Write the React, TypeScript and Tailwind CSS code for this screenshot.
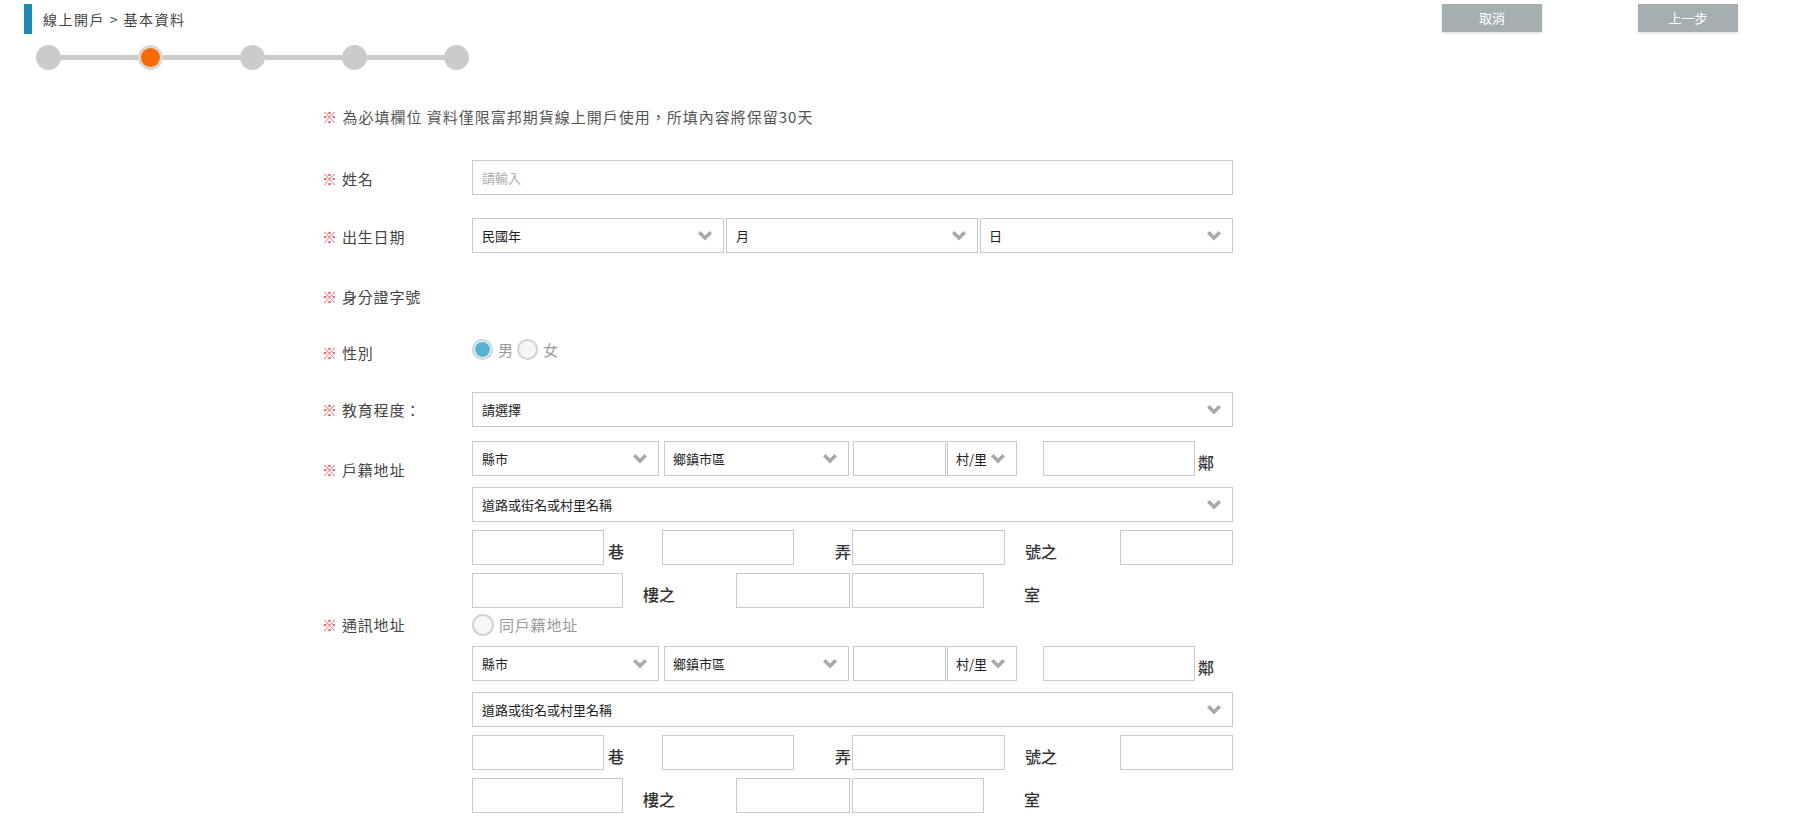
import React from "react";

const Chevron = () => (
  <svg width="14" height="10" viewBox="0 0 14 10" className="shrink-0">
    <polygon points="0,2.5 2.5,0 7,4.5 11.5,0 14,2.5 7,9.5" fill="#a9a9a9" />
  </svg>
);

function Select({ text, w, pl = "pl-[9px]" }: { text: string; w: string; pl?: string }) {
  return (
    <div className={`${w} ${pl} h-[35px] shrink-0 flex items-center justify-between pr-[11px] border border-[#cacaca] bg-white text-[13px] text-[#222]`}>
      <span>{text}</span>
      <Chevron />
    </div>
  );
}

function Box({ w, cls = "" }: { w: string; cls?: string }) {
  return <div className={`${w} ${cls} h-[35px] shrink-0 border border-[#cacaca] bg-white`} />;
}

function Label({ text, pt }: { text: string; pt: string }) {
  return (
    <div className={`w-[150px] shrink-0 ${pt} text-[15px] leading-[20px] tracking-[0.8px] text-[#444]`}>
      <span className="text-[#e8505a]">※</span> {text}
    </div>
  );
}

const Unit = ({ t, cls = "" }: { t: string; cls?: string }) => (
  <span className={`${cls} text-[16px] leading-[20px] pt-[6px] text-[#333] font-medium shrink-0`}>{t}</span>
);

function Address() {
  return (
    <>
      <div className="flex items-center">
        <Select text="縣市" w="w-[187px]" />
        <div className="ml-[5px]">
          <Select text="鄉鎮市區" w="w-[185px]" pl="pl-[8px]" />
        </div>
        <Box w="w-[93px]" cls="ml-[4px]" />
        <div className="ml-[1px]">
          <Select text="村/里" w="w-[70px]" pl="pl-[8px]" />
        </div>
        <Box w="w-[152px]" cls="ml-[26px]" />
        <Unit t="鄰" cls="ml-[3px]" />
      </div>
      <div className="mt-[11px]">
        <Select text="道路或街名或村里名稱" w="w-[761px]" />
      </div>
      <div className="flex items-center mt-[8px]">
        <Box w="w-[132px]" />
        <Unit t="巷" cls="ml-[4px]" />
        <Box w="w-[132px]" cls="ml-[38px]" />
        <Unit t="弄" cls="ml-[41px]" />
        <Box w="w-[153px]" cls="ml-[1px]" />
        <Unit t="號之" cls="ml-[20px]" />
        <Box w="w-[113px]" cls="ml-[63px]" />
      </div>
      <div className="flex items-center mt-[8px]">
        <Box w="w-[151px]" />
        <Unit t="樓之" cls="ml-[20px]" />
        <Box w="w-[114px]" cls="ml-[61px]" />
        <Box w="w-[132px]" cls="ml-[2px]" />
        <Unit t="室" cls="ml-[40px]" />
      </div>
    </>
  );
}

const Radio = ({ on, size = "w-[21px] h-[21px]" }: { on?: boolean; size?: string }) => (
  <div className={`${size} shrink-0 rounded-full border-2 border-[#d2d2d2] bg-[#f6f6f6] flex items-center justify-center`}>
    {on && <div className="w-[15px] h-[15px] rounded-full bg-[#56b3d6]" />}
  </div>
);

export default function App() {
  const Dot = () => <div className="w-[25px] h-[25px] rounded-full bg-[#cbcbcb] shrink-0" />;
  const Line = () => <div className="w-[77px] h-[5px] bg-[#cbcbcb] shrink-0" />;
  return (
    <div className="w-[1815px] h-[819px] bg-white overflow-hidden font-['Noto_Sans_CJK_TC','Noto_Sans',sans-serif]">
      <div className="flex justify-between pt-[4px]">
        <div className="flex items-center h-[30px]">
          <div className="ml-[24px] w-[8px] h-[30px] bg-[#1a8db3]" />
          <span className="ml-[11px] text-[14px] tracking-[1.5px] text-[#444]">線上開戶 &gt; 基本資料</span>
        </div>
        <div className="flex gap-[96px] pr-[77px]">
          <button className="w-[100px] h-[28px] bg-[#a5afb2] text-white text-[13px] shadow-[0_1px_2px_rgba(0,0,0,0.15)]">取消</button>
          <button className="w-[100px] h-[28px] bg-[#a5afb2] text-white text-[13px] shadow-[0_1px_2px_rgba(0,0,0,0.15)]">上一步</button>
        </div>
      </div>

      <div className="flex items-center ml-[36px] mt-[11px]">
        <Dot />
        <Line />
        <div className="w-[25px] h-[25px] rounded-full bg-[#d6d6d6] shrink-0 flex items-center justify-center">
          <div className="w-[19px] h-[19px] rounded-full bg-[#ff6a00]" />
        </div>
        <Line />
        <Dot />
        <Line />
        <Dot />
        <Line />
        <Dot />
      </div>

      <div className="ml-[322px] w-[911px]">
        <p className="mt-[37px] text-[15px] leading-[20px] tracking-[1px] text-[#555]">
          <span className="text-[#e8505a]">※</span> 為必填欄位 資料僅限富邦期貨線上開戶使用，所填內容將保留30天
        </p>

        <div className="flex mt-[33px]">
          <Label text="姓名" pt="pt-[9px]" />
          <div className="w-[761px] h-[35px] border border-[#cacaca] flex items-center pl-[9px] text-[13px] text-[#aaa]">請輸入</div>
        </div>

        <div className="flex mt-[23px]">
          <Label text="出生日期" pt="pt-[9px]" />
          <div className="flex">
            <Select text="民國年" w="w-[252px]" />
            <div className="ml-[2px]">
              <Select text="月" w="w-[252px]" />
            </div>
            <div className="ml-[2px]">
              <Select text="日" w="w-[253px]" pl="pl-[8px]" />
            </div>
          </div>
        </div>

        <div className="flex mt-[34px]">
          <Label text="身分證字號" pt="pt-0" />
        </div>

        <div className="flex mt-[29px]">
          <Label text="性別" pt="pt-[7px]" />
          <div className="flex items-center text-[15px] leading-[21px] text-[#999]">
            <Radio on />
            <span className="ml-[5px]">男</span>
            <div className="ml-[4px]">
              <Radio />
            </div>
            <span className="ml-[5px]">女</span>
          </div>
        </div>

        <div className="flex mt-[29px]">
          <Label text="教育程度：" pt="pt-[8px]" />
          <Select text="請選擇" w="w-[761px]" />
        </div>

        <div className="flex mt-[14px]">
          <Label text="戶籍地址" pt="pt-[19px]" />
          <div className="w-[761px]">
            <Address />
          </div>
        </div>

        <div className="flex mt-[6px]">
          <Label text="通訊地址" pt="pt-[1px]" />
          <div className="w-[761px]">
            <div className="flex items-center h-[22px]">
              <Radio size="w-[22px] h-[22px]" />
              <span className="ml-[5px] text-[15px] tracking-[0.8px] text-[#999]">同戶籍地址</span>
            </div>
            <div className="mt-[10px]">
              <Address />
            </div>
          </div>
        </div>
      </div>
    </div>
  );
}
